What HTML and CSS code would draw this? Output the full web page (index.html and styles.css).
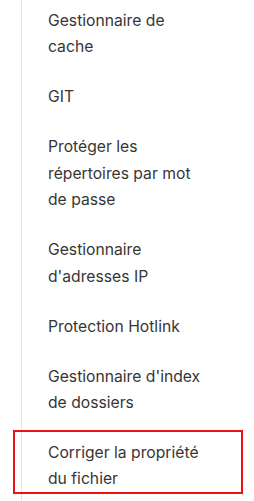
FILE: index.html
```html
<!DOCTYPE html>
<html lang="fr">
<head>
<meta charset="utf-8">
<title>Menu</title>
<link rel="stylesheet" href="styles.css">
</head>
<body>
<nav class="submenu">
  <ul class="menu-list">
    <li class="menu-item">Gestionnaire de<br>cache</li>
    <li class="menu-item">GIT</li>
    <li class="menu-item">Protéger les<br>répertoires par mot<br>de passe</li>
    <li class="menu-item">Gestionnaire<br>d'adresses IP</li>
    <li class="menu-item">Protection Hotlink</li>
    <li class="menu-item">Gestionnaire d'index<br>de dossiers</li>
    <li class="menu-item is-highlighted">Corriger la propriété<br>du fichier</li>
  </ul>
</nav>
</body>
</html>
```

FILE: styles.css
```css
html, body {
  margin: 0;
  padding: 0;
  background: #ffffff;
}

body {
  width: 254px;
  height: 501px;
  overflow: hidden;
  font-family: Inter, "Noto Sans", sans-serif;
}

.submenu {
  margin-left: 21px;
  border-left: 1px solid #e4e4e4;
  height: 501px;
  padding-left: 26px;
  box-sizing: border-box;
}

.menu-list {
  list-style: none;
  margin: 0;
  padding: 8px 0 0 0;
  display: flex;
  flex-direction: column;
  gap: 23.6px;
}

.menu-item {
  font-size: 15.7px;
  line-height: 26.4px;
  color: #363636;
  white-space: nowrap;
}

.is-highlighted {
  position: relative;
}

.is-highlighted::after {
  content: "";
  position: absolute;
  left: -35px;
  right: 11px;
  top: -10px;
  bottom: -1px;
  border: 2px solid #ee1111;
  pointer-events: none;
}
```
